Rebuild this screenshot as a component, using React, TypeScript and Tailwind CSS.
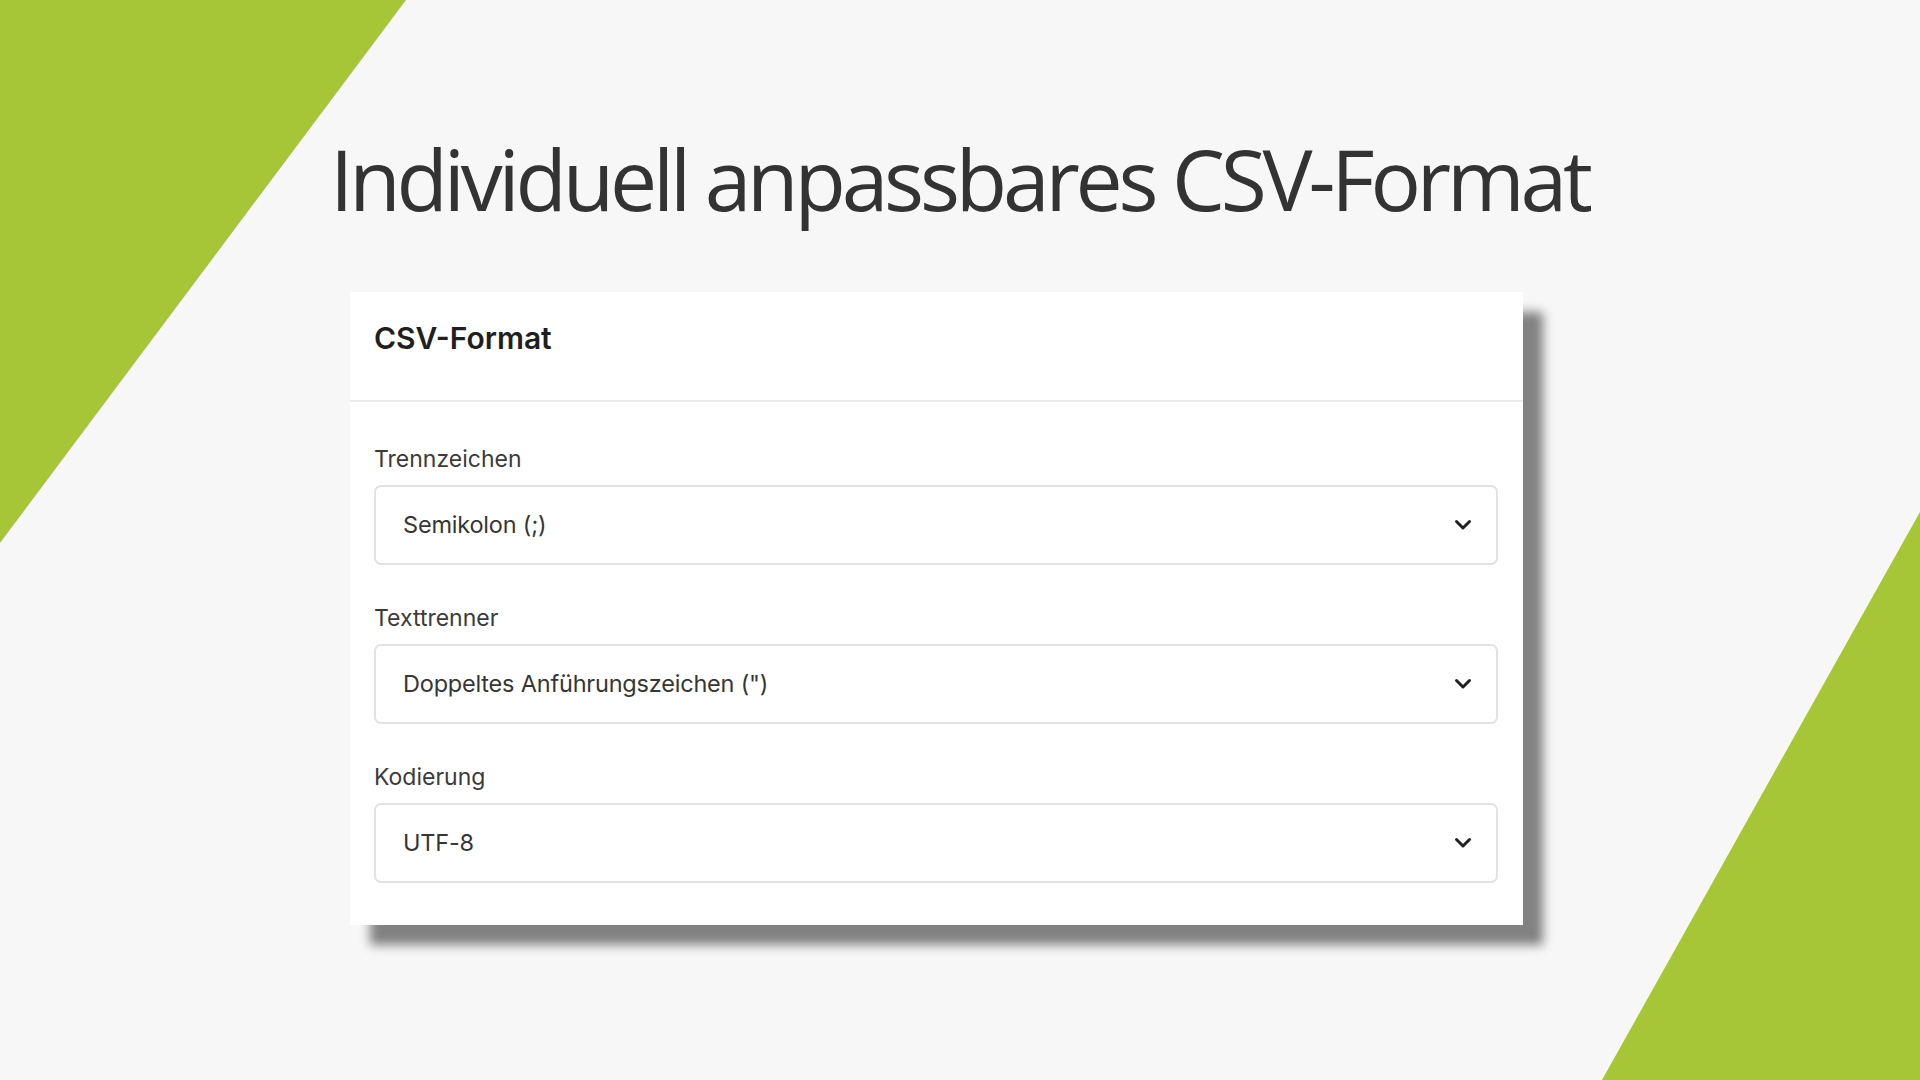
const fields = [
  { label: "Trennzeichen", value: "Semikolon (;)" },
  { label: "Texttrenner", value: 'Doppeltes Anführungszeichen (")' },
  { label: "Kodierung", value: "UTF-8" },
];

function Chevron() {
  return (
    <svg width="18" height="12" viewBox="0 0 18 12" fill="none" aria-hidden="true">
      <path
        d="M2.5 2.5 L9 9 L15.5 2.5"
        stroke="#222"
        strokeWidth="3"
        strokeLinecap="round"
        strokeLinejoin="round"
      />
    </svg>
  );
}

function SelectField({ label, value }: { label: string; value: string }) {
  return (
    <div className="flex flex-col">
      <label className="text-[23px] leading-[28px] text-[#3b3b3b] mb-3">{label}</label>
      <div className="flex items-center justify-between h-[80px] pl-[27px] pr-[24px] border-2 border-[#e2e2e2] rounded-[7px] bg-white">
        <span className="text-[23.5px] tracking-[-0.2px] text-[#363636]">{value}</span>
        <Chevron />
      </div>
    </div>
  );
}

function Backdrop() {
  return (
    <svg className="absolute inset-0 w-full h-full" viewBox="0 0 1920 1080" preserveAspectRatio="none" aria-hidden="true">
      <polygon points="0,0 406,0 0,543" fill="#a6c637" />
      <polygon points="1920,512 1920,1080 1602,1080" fill="#a6c637" />
    </svg>
  );
}

export default function App() {
  return (
    <div className="relative w-[1920px] h-[1080px] overflow-hidden bg-[#f7f7f7]">
      <Backdrop />
      <div className="relative flex flex-col">
        <h1 className="pt-[137px] pl-[330px] text-[84px] leading-[84px] tracking-[-4.2px] text-[#333] font-normal font-['Open_Sans',sans-serif]">
          Individuell anpassbares CSV-Format
        </h1>
        <div className="mt-[71px] ml-[350px] w-[1173px] bg-white shadow-[20px_20px_10px_rgba(0,0,0,0.48)] font-['Inter',sans-serif]">
          <div className="h-[110px] pt-[28px] px-[24px] border-b-2 border-[#ebebeb]">
            <h2 className="text-[30px] leading-[36px] font-semibold text-[#1f1f1f]">CSV-Format</h2>
          </div>
          <div className="flex flex-col gap-[39px] pt-[43px] pb-[42px] pl-[24px] pr-[25px]">
            {fields.map((f) => (
              <SelectField key={f.label} label={f.label} value={f.value} />
            ))}
          </div>
        </div>
      </div>
    </div>
  );
}
